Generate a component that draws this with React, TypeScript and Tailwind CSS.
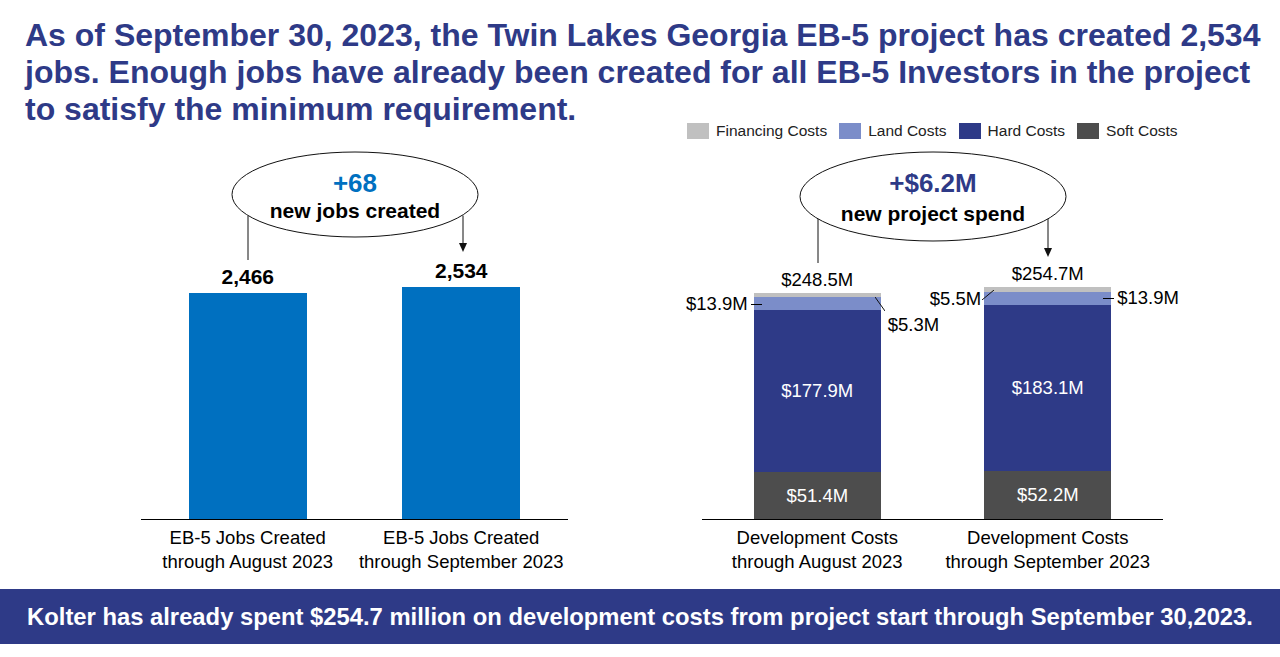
import React from "react";

const NAVY = "#2E3A87";

const jobs = [
  { lines: ["EB-5 Jobs Created", "through August 2023"], value: 2466 },
  { lines: ["EB-5 Jobs Created", "through September 2023"], value: 2534 },
];

type Cost = {
  lines: string[];
  total: string;
  soft: number;
  hard: number;
  land: number;
  fin: number;
  flip: boolean;
};

const costs: Cost[] = [
  { lines: ["Development Costs", "through August 2023"], total: "$248.5M", soft: 51.4, hard: 177.9, land: 13.9, fin: 5.3, flip: false },
  { lines: ["Development Costs", "through September 2023"], total: "$254.7M", soft: 52.2, hard: 183.1, land: 13.9, fin: 5.5, flip: true },
];

const JOB_PX = 232 / 2534;
const COST_PX = 0.911;

const legend = [
  { label: "Financing Costs", color: "bg-[#C0C0C0]" },
  { label: "Land Costs", color: "bg-[#7B8DC9]" },
  { label: "Hard Costs", color: "bg-[#2E3A87]" },
  { label: "Soft Costs", color: "bg-[#4D4D4D]" },
];

function money(v: number) {
  return `$${v.toFixed(1)}M`;
}

function CategoryLabels({ items }: { items: { lines: string[] }[] }) {
  return (
    <div className="flex pt-[6px] text-[18.5px] leading-[24px] text-black">
      {items.map((item) => (
        <div key={item.lines[1]} className="flex-1 text-center whitespace-nowrap">
          {item.lines[0]}
          <br />
          {item.lines[1]}
        </div>
      ))}
    </div>
  );
}

function JobsChart() {
  return (
    <div className="relative ml-[141px] w-[427px]">
      <svg className="absolute inset-0 pointer-events-none" width="427" height="459">
        <ellipse cx="214" cy="64.5" rx="123" ry="42.5" fill="white" stroke="#111" strokeWidth="1" />
        <line x1="107" y1="86" x2="107" y2="130" stroke="#111" strokeWidth="1" />
        <line x1="322" y1="85.5" x2="322" y2="114" stroke="#111" strokeWidth="1" />
        <polygon points="318,113 326,113 322,122" fill="#111" />
      </svg>
      <div className="absolute left-[91px] top-[22px] w-[246px] flex flex-col items-center pt-[16px] font-bold">
        <div className="text-[26px] leading-[30px] text-[#0070C0]">+68</div>
        <div className="text-[21px] leading-[26px] text-black">new jobs created</div>
      </div>
      <div className="flex h-[390px] items-end border-b border-black">
        {jobs.map((j) => (
          <div key={j.lines[1]} className="flex flex-1 flex-col items-center">
            <div className="mb-[4px] text-[21px] font-bold leading-[24px] text-black">{j.value.toLocaleString("en-US")}</div>
            <div className="w-[118px] bg-[#0070C0]" style={{ height: j.value * JOB_PX }} />
          </div>
        ))}
      </div>
      <CategoryLabels items={jobs} />
    </div>
  );
}

function CostBar({ d }: { d: Cost }) {
  return (
    <div className="flex flex-1 flex-col items-center">
      <div className="mb-[2px] text-[18.5px] leading-[22px] text-black">{d.total}</div>
      <div className="relative flex w-[127px] flex-col text-[18.5px] leading-[22px]">
        <div className="bg-[#C0C0C0]" style={{ height: d.fin * COST_PX }} />
        <div className="relative bg-[#7B8DC9]" style={{ height: d.land * COST_PX }}>
          {d.flip ? (
            <>
              <div className="absolute right-[-3px] top-1/2 h-px w-[11px] bg-black" />
              <div className="absolute left-[calc(100%+6px)] top-1/2 -translate-y-1/2 whitespace-nowrap text-black">{money(d.land)}</div>
            </>
          ) : (
            <>
              <div className="absolute left-[-3px] top-1/2 h-px w-[11px] bg-black" />
              <div className="absolute right-[calc(100%+6px)] top-1/2 -translate-y-1/2 whitespace-nowrap text-black">{money(d.land)}</div>
            </>
          )}
        </div>
        <div className="flex items-center justify-center bg-[#2E3A87] text-white" style={{ height: d.hard * COST_PX }}>
          {money(d.hard)}
        </div>
        <div className="flex items-center justify-center bg-[#4D4D4D] text-white" style={{ height: d.soft * COST_PX }}>
          {money(d.soft)}
        </div>
        {d.flip ? (
          <>
            <svg className="absolute left-[-2px] top-[3px]" width="12" height="10">
              <line x1="0" y1="10" x2="12" y2="0" stroke="#111" strokeWidth="1" />
            </svg>
            <div className="absolute right-[calc(100%+3px)] top-[1px] whitespace-nowrap text-black">{money(d.fin)}</div>
          </>
        ) : (
          <>
            <svg className="absolute left-[121px] top-[4px]" width="10" height="14">
              <line x1="0" y1="0" x2="10" y2="14" stroke="#111" strokeWidth="1" />
            </svg>
            <div className="absolute left-[calc(100%+7px)] top-[21px] whitespace-nowrap text-black">{money(d.fin)}</div>
          </>
        )}
      </div>
    </div>
  );
}

function CostChart() {
  return (
    <div className="relative ml-[134px] w-[461px]">
      <div className="absolute left-[-15px] top-[-7px] flex items-center gap-[12px] whitespace-nowrap text-[15.5px] leading-[16px] text-[#222]">
        {legend.map((l) => (
          <div key={l.label} className="flex items-center gap-[7px]">
            <span className={`h-[16px] w-[22px] ${l.color}`} />
            <span>{l.label}</span>
          </div>
        ))}
      </div>
      <svg className="absolute inset-0 pointer-events-none" width="461" height="459">
        <ellipse cx="231" cy="66.5" rx="133" ry="44.5" fill="white" stroke="#111" strokeWidth="1" />
        <line x1="116" y1="89" x2="116" y2="133" stroke="#111" strokeWidth="1" />
        <line x1="346" y1="89" x2="346" y2="119" stroke="#111" strokeWidth="1" />
        <polygon points="342,118 350,118 346,127" fill="#111" />
      </svg>
      <div className="absolute left-[98px] top-[22px] w-[266px] flex flex-col items-center pt-[16px] font-bold">
        <div className="text-[26px] leading-[30px] text-[#2E3A87]">+$6.2M</div>
        <div className="mt-[3px] text-[21px] leading-[26px] text-black">new project spend</div>
      </div>
      <div className="flex h-[390px] items-end border-b border-black">
        {costs.map((c) => (
          <CostBar key={c.total} d={c} />
        ))}
      </div>
      <CategoryLabels items={costs} />
    </div>
  );
}

export default function App() {
  return (
    <div className="flex h-[657px] w-[1280px] flex-col overflow-hidden bg-white font-['Liberation_Sans',Arial,sans-serif]">
      <h1 className="h-[130px] pl-[25px] pt-[17px] text-[32px] font-bold leading-[37px] whitespace-nowrap" style={{ color: NAVY }}>
        <span className="block">As of September 30, 2023, the Twin Lakes Georgia EB-5 project has created 2,534</span>
        <span className="block">jobs. Enough jobs have already been created for all EB-5 Investors in the project</span>
        <span className="block">to satisfy the minimum requirement.</span>
      </h1>
      <div className="flex h-[459px]">
        <JobsChart />
        <CostChart />
      </div>
      <div className="flex h-[55px] items-center justify-center bg-[#2E3A87] text-[23.8px] font-bold whitespace-nowrap text-white">
        Kolter has already spent $254.7 million on development costs from project start through September 30,2023.
      </div>
    </div>
  );
}
